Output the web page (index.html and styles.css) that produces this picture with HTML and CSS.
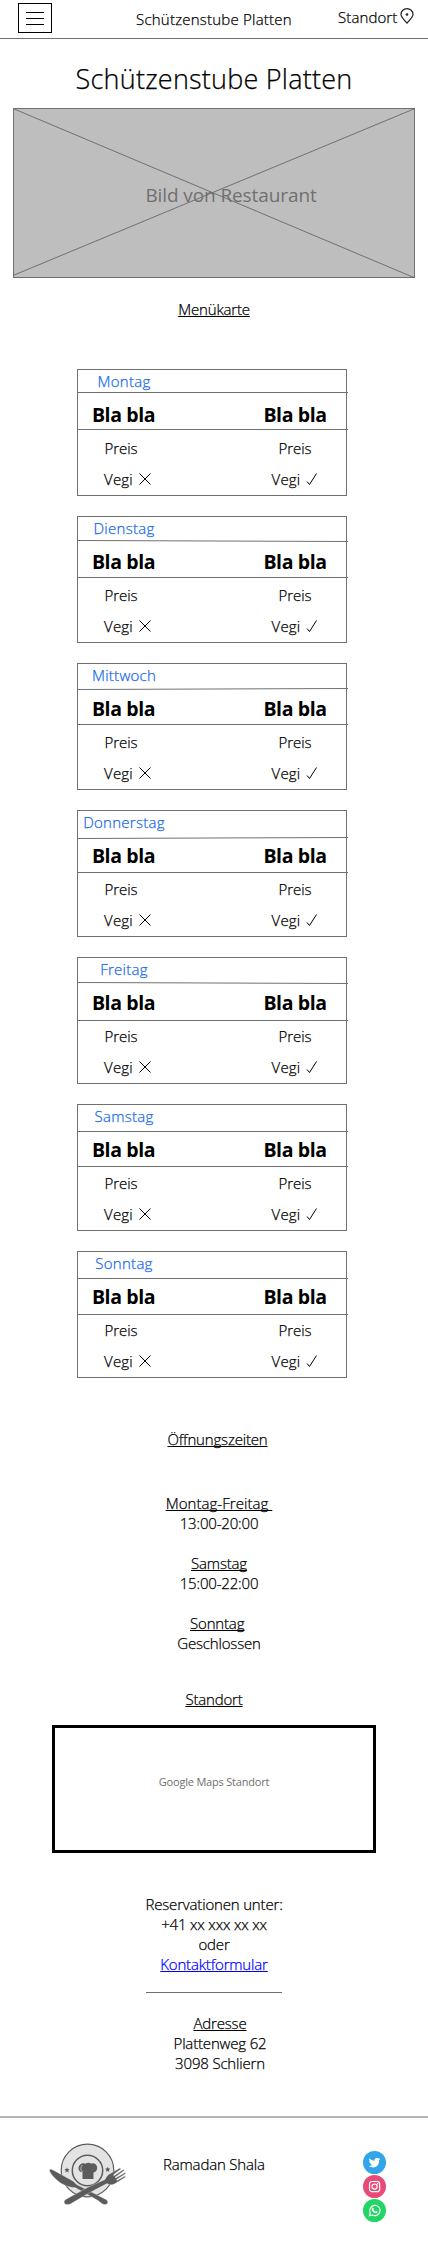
FILE: index.html
```html
<!DOCTYPE html>
<html lang="de">
<head>
<meta charset="utf-8">
<title>Schützenstube Platten</title>
<link rel="stylesheet" href="styles.css">
</head>
<body>
<header class="topbar">
  <button class="menu" aria-label="Menü"><span class="bar"></span><span class="bar"></span><span class="bar"></span></button>
  <span class="brand">Schützenstube Platten</span>
  <a class="pin-link">Standort<svg class="pin" viewBox="0 0 14 16"><path d="M7 15.2C4.600 12.200 1 9.400 1 6.300a6 5.700 0 0 1 12 0C13 9.400 9.400 12.200 7 15.200Z"/><circle cx="7" cy="6.500" r="1.300"/></svg></a>
</header>
<main>
  <h1 class="title">Schützenstube Platten</h1>
  <div class="hero">
    <svg class="cross" viewBox="0 0 402 170" preserveAspectRatio="none"><path d="M0 0.500L402 170M0 167.500L402 0.500"/></svg>
    <span class="hero-text">Bild von Restaurant</span>
  </div>
  <h2 class="section menu-title">Menükarte</h2>
  <div class="cards" id="cards"></div>
  <h2 class="section hours-title">Öffnungszeiten</h2>
  <div class="hours">
    <p><u class="range">Montag-Freitag&nbsp;</u><br><span class="num">13:00-20:00</span></p>
    <p><u>Samstag</u><br><span class="num">15:00-22:00</span></p>
    <p><u>Sonntag</u>&nbsp;<br>Geschlossen</p>
  </div>
  <h2 class="section place-title">Standort</h2>
  <div class="map">Google Maps Standort</div>
  <div class="contact">Reservationen unter:<br>+41 xx xxx xx xx<br>oder<br><a href="#">Kontaktformular</a></div>
  <hr class="rule">
  <address class="address"><u>Adresse</u><br>Plattenweg 62<br>3098 Schliern</address>
</main>
<footer class="footer">
  <svg class="logo" viewBox="0 0 78 62">
    <circle cx="38.500" cy="27.500" r="26.300" fill="#e3e3e3" stroke="#5c5c5c" stroke-width="1.200"/>
    <circle cx="38.500" cy="27.500" r="15.200" fill="#e3e3e3" stroke="#5c5c5c" stroke-width="1.500"/>
    <path class="ink" d="M33.500 36V29.500C29.500 29 28.500 25 30.500 22.300C32 20 35 19.800 36.300 20.700C38 19.300 41 19.300 42.500 20.700C45 19.500 48 21.500 48.200 24.500C48.300 27.500 46.500 29 44.500 29.500V36Z"/>
    <path d="M34 29.300C31.500 28 31 24 33.500 22" fill="none" stroke="#e3e3e3" stroke-width=".7"/>
    <path class="ink" d="M18 24.500l.8 1.600 1.800.2-1.300 1.300.3 1.800-1.600-.8-1.600.8.3-1.800-1.300-1.300 1.800-.2zM58.700 23.800l.8 1.600 1.800.2-1.300 1.300.3 1.800-1.600-.8-1.600.8.3-1.800-1.300-1.300 1.800-.2z"/>
    <path class="ink" stroke="#fff" stroke-width=".3" d="M.5 28C0 26 2 26 4 27L23 37.500C26.500 39.500 26.500 41 28.500 42L38.500 47L57 56.500C60 58.500 59 61.800 55.500 61.500C53 61 51 59 49 57.500L36 50L26 44.500C20 44.500 14 42 9 38C5 35 2 31 .5 28Z"/>
    <path class="ink" stroke="#fff" stroke-width=".3" d="M16 61C14.500 59.500 15 57.500 17 56.300L38.500 44.500L56 36.500C57.500 34 58 32 60.500 31L71 25L72 26L64 32L64.700 33L74.500 26.500L75.300 27.500L66 34.200L66.600 35.100L76.300 29.500L76.700 30.700L67.500 36.500L68 37.400L76.300 32.800L76.300 34.200L67 40C64 42 61 42.500 58 40.500L40 50L23 60C20.500 61.800 18 62 16 61Z"/>
  </svg>
  <span class="owner">Ramadan Shala</span>
  <div class="social">
    <svg viewBox="0 0 24 24"><circle cx="12" cy="12" r="12" fill="#31a4ea"/><path fill="#fff" d="M18 8.300c-.4.200-.9.300-1.400.4.500-.3.900-.8 1-1.400-.4.300-1 .5-1.500.6A2.500 2.500 0 0 0 11.900 10.200c-2-.1-3.900-1.100-5.100-2.700-.6 1.100-.3 2.500.8 3.200-.4 0-.8-.1-1.100-.3 0 1.200.8 2.200 2 2.500-.4.100-.7.100-1.100 0 .3 1 1.200 1.700 2.300 1.700a5 5 0 0 1-3.600 1C12 19.300 17 15.800 16.800 9.600c.5-.3.900-.8 1.200-1.300Z"/></svg>
    <svg viewBox="0 0 24 24"><circle cx="12" cy="12" r="12" fill="#e84b78"/><g fill="none" stroke="#fff" stroke-width="1.200"><rect x="6.800" y="6.800" width="10.600" height="10.600" rx="2.600"/><circle cx="12.100" cy="12.100" r="2.700"/></g><circle cx="15.200" cy="9" r=".8" fill="#fff"/></svg>
    <svg viewBox="0 0 24 24"><circle cx="12" cy="12" r="12" fill="#23d566"/><path fill="none" stroke="#fff" stroke-width="1.200" d="M6.700 17.500l.9-3A5.400 5.400 0 1 1 9.700 16.700Z"/><path fill="#fff" d="M9.700 9.200c.5-.5 1-.3 1.200.2l.4 1-.5.9c.5.900 1.200 1.500 2.100 1.900l.7-.7c.4 0 1.300.4 1.600.7.100 1.100-.9 1.700-1.900 1.600-2.300-.3-4.600-2.900-4.300-4.400Z"/></svg>
  </div>
</footer>
<script src="menu.js"></script>
</body>
</html>
```

FILE: styles.css
```css
* { box-sizing: border-box; }
body { margin: 0; background: #fff; color: #000; font: 300 15px/20px "Open Sans", "Noto Sans", sans-serif; letter-spacing: -.17px; -webkit-text-stroke: .25px currentcolor; height: 2249px; }
h1, h2, p { margin: 0; font-weight: 300; }
u, .section, .contact a { text-decoration: underline; text-decoration-thickness: 1px; text-underline-offset: 1px; text-decoration-skip-ink: none; }
.topbar { height: 39px; border-bottom: 1px solid #707070; display: flex; align-items: flex-start; padding-left: 18px; }
.menu { width: 34px; height: 30px; margin: 3px 0 0; padding: 0 7px; border: 1px solid #000; background: #fff; display: flex; flex-direction: column; justify-content: center; gap: 5px; }
.bar { height: 1px; background: #000; }
.brand { margin: 9px 0 0 84px; width: 157px; white-space: nowrap; letter-spacing: .22px; }
.pin-link { margin: 7px 0 0 45px; display: flex; white-space: nowrap; letter-spacing: .1px; }
.pin { width: 14px; height: 16px; margin: 1px 0 0 3px; fill: none; stroke: #222; stroke-width: 1.2; }
.pin circle { fill: #222; stroke: none; }
.title { font-size: 27px; line-height: 36px; margin-top: 22px; text-align: center; letter-spacing: .22px; }
.hero { margin: 11px 13px 0; width: 402px; height: 170px; position: relative; background: #bebebe; border: 1px solid #707070; display: flex; justify-content: center; padding: 73px 0 0 34px; }
.cross { position: absolute; left: -1px; top: -1px; width: 402px; height: 170px; fill: none; stroke: #707070; }
.hero-text { font-size: 19px; font-weight: 400; -webkit-text-stroke: 0; line-height: 26px; color: #707070; letter-spacing: -.1px; }
.section { font-size: 15px; text-align: center; }
.menu-title { margin-top: 21px; }
.cards { margin: 50px 0 0 77px; width: 270px; display: flex; flex-direction: column; gap: 20px; }
.card { position: relative; height: 127px; border: 1px solid #707070; padding: 1px 5px 0 0; }
.lines { position: absolute; left: -1px; top: -1px; width: 271px; height: 127px; fill: none; stroke: #707070; }
.day { width: 92px; text-align: center; color: #1769e8; white-space: nowrap; letter-spacing: .27px; }
.dishes { display: flex; justify-content: space-between; margin-top: 11px; }
.dish { width: 92px; display: flex; flex-direction: column; align-items: center; }
.name { font-size: 19.5px; font-weight: 700; -webkit-text-stroke: 0; line-height: 26px; letter-spacing: -.4px; white-space: nowrap; }
.price { margin-top: 10px; letter-spacing: 0; }
.vegi { margin-top: 11px; display: flex; gap: 6px; letter-spacing: .2px; }
.dish:first-child .name { margin-right: 1px; }
.dish:first-child .price { margin-right: 6px; }
.dish:first-child .vegi { margin-left: 7px; }
.mark { width: 12px; height: 12px; margin-top: 4px; fill: none; stroke: #000; stroke-width: 1; }
.hours-title { margin: 51px 0 0 7px; }
.hours { margin: 44px 0 0 10px; text-align: center; display: flex; flex-direction: column; gap: 20px; }
.range { letter-spacing: .05px; }
.place-title { margin-top: 36px; }
.map { margin: 16px 0 0 52px; width: 324px; height: 128px; border: 3px solid #000; padding-top: 44px; text-align: center; font-size: 11px; font-weight: 400; -webkit-text-stroke: 0; line-height: 20px; color: #707070; letter-spacing: -.2px; }
.contact { margin-top: 41px; text-align: center; }
.contact a { color: #00f; }
.rule { margin: 18px auto 0; width: 136px; height: 1px; border: 0; background: #707070; }
.address { font-style: normal; text-align: center; margin: 20px 0 0 12px; }
.footer { margin-top: 43px; border-top: 2px solid #b4b4b4; display: flex; align-items: flex-start; padding-left: 49px; }
.logo { width: 78px; height: 62px; margin-top: 25px; }
.ink { fill: #5c5c5c; }
.owner { margin: 36px 0 0 36px; width: 104px; white-space: nowrap; letter-spacing: -.17px; }
.social { margin: 33px 0 0 96px; display: flex; flex-direction: column; gap: 1px; }
.social svg { width: 23px; height: 23px; }
```

FILE: menu.js
```js
// Day name, then the left and right heights of the upper divider and the height of the lower one.
const days = [
  ["Montag", 23.5, 23.5, 60.5], ["Dienstag", 24.5, 25.5, 61.5], ["Mittwoch", 26.5, 25.5, 61.5],
  ["Donnerstag", 28.5, 27.5, 62.5], ["Freitag", 25.5, 26.5, 63.5], ["Samstag", 27.5, 27.5, 62.5],
  ["Sonntag", 27.5, 27.5, 63.5]
];
const no = '<path d="M.5 .5L11.500 11.500M11.500 .5L.5 11.500"/>';
const yes = '<path d="M1 8.500L3.500 11.500L10.500 .5"/>';
const dish = mark => `<div class="dish"><span class="name">Bla bla</span><span class="price">Preis</span><span class="vegi">Vegi<svg class="mark" viewBox="0 0 12 12">${mark}</svg></span></div>`;
document.getElementById("cards").innerHTML = days.map(([day, a, b, c]) =>
  `<section class="card"><svg class="lines" viewBox="0 0 271 127"><path d="M1 ${a}L271 ${b}M1 ${c}H271"/></svg><div class="day">${day}</div><div class="dishes">${dish(no)}${dish(yes)}</div></section>`).join("");
```
